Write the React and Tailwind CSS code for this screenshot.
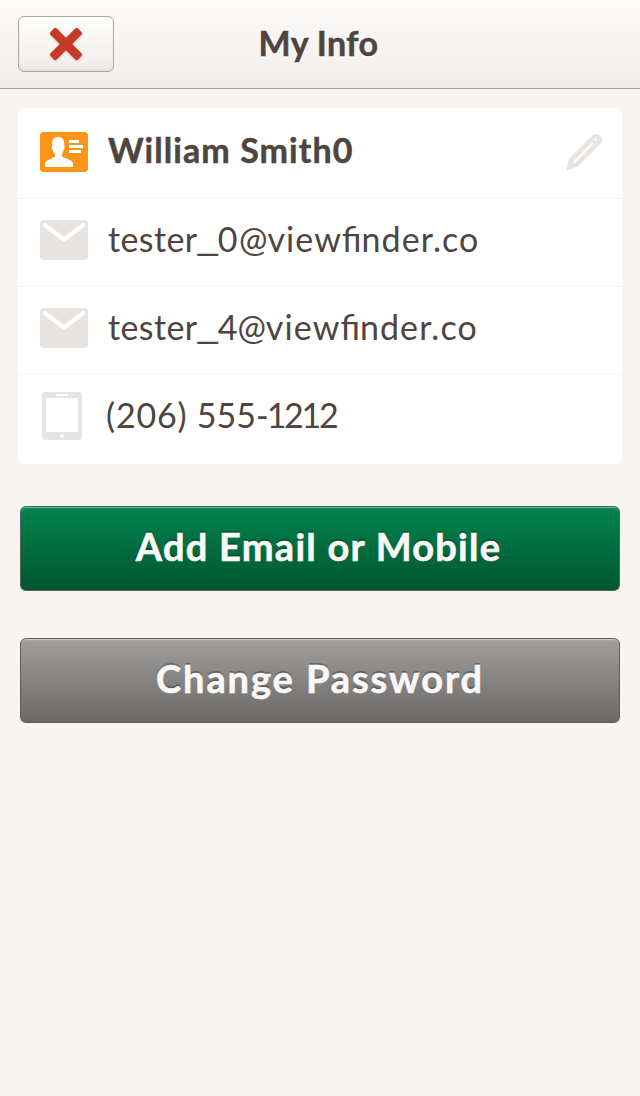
function CloseIcon() {
  return (
    <svg width="36" height="36" viewBox="0 0 36 36" className="overflow-visible drop-shadow-[0_1px_1px_rgba(0,0,0,0.2)]">
      <g fill="#c83828">
        <rect x="-1.5" y="13.6" width="39" height="8.800" rx="2" transform="rotate(45 18 18)" />
        <rect x="-1.5" y="13.6" width="39" height="8.800" rx="2" transform="rotate(-45 18 18)" />
      </g>
    </svg>
  );
}

function ContactIcon() {
  return (
    <svg width="48" height="40" viewBox="0 0 48 40">
      <rect width="48" height="40" rx="3.5" fill="#fc9518" />
      <path
        fill="#fff"
        d="M18 5c4 0 6.200 2.300 6.200 6v3.200c.8.300.7 2.300-.5 3.600-.4 1.800-1.100 3.100-1.700 4.200v2.500c2.200 1.500 6 2.500 9 4.300 1.600 1 2 2 2 3.600V35H5v-2.600c0-1.600.4-2.600 2-3.600 3-1.800 6.300-2.800 8-4.300V22c-1.100-1.100-1.900-2.400-2.300-4.200-1.200-1.300-1.300-3.300-.5-3.600V11c0-3.700 2.200-6 5.800-6z"
      />
      <path fill="#fff" d="M29 8h10v3H29zM29 13h14v3H29zM29 18h12v3H29z" />
    </svg>
  );
}

function MailIcon() {
  return (
    <svg width="48" height="40" viewBox="0 0 48 40">
      <rect width="48" height="40" rx="3.500" fill="#e7e3e0" />
      <path d="M5 5l19 14.700L43 5" fill="none" stroke="#fff" strokeWidth="4.300" strokeLinecap="round" />
    </svg>
  );
}

function PhoneIcon() {
  return (
    <svg width="48" height="48" viewBox="0 0 48 48">
      <rect x="2" width="40" height="48" rx="3" fill="#e7e3e0" />
      <rect x="6" y="6" width="32" height="34" fill="#fff" />
      <rect x="16" y="2" width="12" height="2" rx="0.500" fill="#fff" />
      <circle cx="22" cy="44" r="2" fill="#fff" />
    </svg>
  );
}

function PencilIcon() {
  return (
    <svg width="36" height="38" viewBox="0 0 36 38">
      <path
        fill="#e7e3e0"
        fillRule="evenodd"
        d="M0 35.500L3 24.800 25.800 2C28.600-.6 32.100-.4 34.300 1.800 36.800 4.300 36.600 7.700 34.100 10.200L11.700 32.600 1.600 36.400Q.3 37 0 35.500zM7.200 27.500V29.800L9 29.500 27.500 9.700 26.300 7.800zM29.300 4.300a1.300 1.300 0 1 0 .1 2.600a1.300 1.300 0 1 0-.1-2.600z"
      />
    </svg>
  );
}

function InfoRow({ icon, children, className }) {
  return (
    <div className={`flex items-start pl-[22px] pr-5 ${className}`}>
      <div className="w-12 shrink-0">{icon}</div>
      {children}
    </div>
  );
}

function Email({ name, digit, digitClass }) {
  return (
    <span className="-mt-[21px] ml-5 text-[34px] leading-[80px] whitespace-nowrap">
      <span className="tracking-[0.4px]">{name}</span>
      <span className="relative -top-[3px] font-['Liberation_Sans',sans-serif] text-[36px] leading-none">_</span>
      <span className={digitClass}>{digit}</span>@<span className="tracking-[1.1px]">view</span>fi
      <span className="tracking-[1.1px]">nder.co</span>
    </span>
  );
}

export default function App() {
  return (
    <div className="h-[1096px] w-[640px] overflow-hidden bg-[#f8f4f1] font-['Lato',sans-serif] text-[#50443f]">
      <header className="grid h-[89px] grid-cols-[96px_1fr_96px] items-start border-b border-[#a79f9c] bg-linear-to-b from-[#fcfbfa] to-[#f1ede9] px-[18px]">
        <button
          aria-label="Close"
          className="mt-4 flex h-14 w-24 items-center justify-center rounded-md border border-[#aea6a3] bg-linear-to-b from-[#fefefd] to-[#f0ece8] shadow-[inset_0_-2px_3px_-1px_rgba(0,0,0,0.09)]"
        >
          <CloseIcon />
        </button>
        <h1 className="pr-[3px] text-center text-[34px] leading-[86px] font-bold tracking-[0.4px] whitespace-nowrap [-webkit-text-stroke:0.5px_#50443f] [text-shadow:0_2px_0_#fff]">
          My Info
        </h1>
      </header>

      <main>
        <section className="mx-[18px] mt-[19px] h-[356px] rounded-md bg-white">
          <InfoRow className="h-[91px] border-b border-[#f5f4f3] pt-6" icon={<ContactIcon />}>
            <span className="-mt-6 ml-5 text-[34px] leading-[84px] font-bold tracking-[1.05px] whitespace-nowrap [-webkit-text-stroke:0.5px_#50443f]">
              William Smith0
            </span>
            <span className="mt-[2px] ml-auto">
              <PencilIcon />
            </span>
          </InfoRow>
          <InfoRow className="h-[88px] border-b border-[#f5f4f3] pt-[21px]" icon={<MailIcon />}>
            <Email name="tester" digit="0" digitClass="tracking-[1.6px]" />
          </InfoRow>
          <InfoRow className="h-[88px] border-b border-[#f8f4f1] pt-[21px]" icon={<MailIcon />}>
            <Email name="tester" digit="4" digitClass="tracking-normal" />
          </InfoRow>
          <InfoRow className="h-[89px] pt-[17px]" icon={<PhoneIcon />}>
            <span className="-mt-[17px] ml-[18px] text-[34px] leading-[80px] whitespace-nowrap">
              <span className="tracking-[0.8px]">(206) </span>
              <span className="tracking-normal">555</span>
              <span className="tracking-[-2px]">-</span>
              <span className="tracking-[-2.3px]">1212</span>
            </span>
          </InfoRow>
        </section>

        <div className="mx-5 mt-[42px] flex flex-col gap-[47px]">
          <button className="h-[85px] rounded-md border border-[#53615a] bg-linear-to-b from-[#00844e] to-[#005631] pr-[3px] pb-[5px] text-[38px] leading-[78px] font-bold tracking-[1.25px] whitespace-nowrap text-[#faf8f6] shadow-[inset_0_2px_1px_-1px_rgba(255,255,255,0.45)] [-webkit-text-stroke:0.6px_#faf8f6] [text-shadow:0_-2px_1px_rgba(0,0,0,0.3)]">
            Add Email or Mobile
          </button>
          <button className="h-[85px] rounded-md border border-[#5f5c5c] bg-linear-to-b from-[#a09f9c] to-[#6c6969] pr-0 pb-[5px] text-[38px] leading-[78px] font-bold tracking-[1.9px] whitespace-nowrap text-[#faf8f6] shadow-[inset_0_2px_1px_-1px_rgba(255,255,255,0.45)] [-webkit-text-stroke:0.6px_#faf8f6] [text-shadow:0_-2px_1px_rgba(0,0,0,0.3)]">
            Change Password
          </button>
        </div>
      </main>
    </div>
  );
}
